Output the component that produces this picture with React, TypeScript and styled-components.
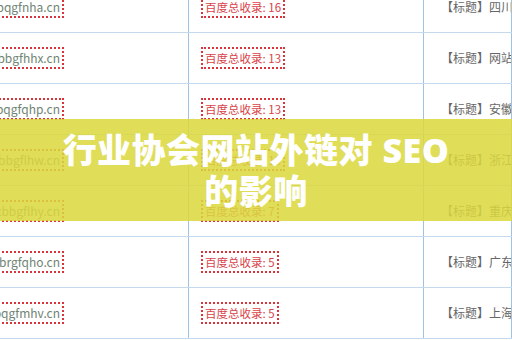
import styled, { createGlobalStyle } from "styled-components";

const GlobalStyle = createGlobalStyle`
  html, body {
    margin: 0;
    padding: 0;
    background: #ffffff;
    overflow: hidden;
  }
  body {
    font-family: "Noto Sans", "Noto Sans CJK SC", sans-serif;
  }
`;

const Stage = styled.div`
  position: relative;
  width: 512px;
  height: 340px;
  overflow: hidden;
  background: #fff;
`;

const Table = styled.div`
  margin-top: -18px;
  margin-left: -40px;
  display: flex;
  flex-direction: column;
`;

const Row = styled.div`
  display: grid;
  grid-template-columns: 229px 235px 1fr;
  height: 51px;
  box-sizing: border-box;
  border-bottom: 1px solid #c4d9ec;
`;

const Cell = styled.div<{ $align?: "start" | "end" }>`
  display: flex;
  align-items: center;
  justify-content: ${({ $align }) => ($align === "end" ? "flex-end" : "flex-start")};
  box-sizing: border-box;
  border-right: 1px solid #9fc2e2;
  padding: ${({ $align }) => ($align === "end" ? "0 124px 0 0" : "0 0 0 12px")};
  white-space: nowrap;
  overflow: hidden;
  font-family: "Noto Sans CJK SC", "Noto Sans", sans-serif;
  font-size: 12px;
  line-height: 16px;
`;

const Boxed = styled.span<{ $tone: "domain" | "count" }>`
  display: inline-block;
  padding: 1px 2px;
  border: 2px dotted #d8343a;
  font-size: ${({ $tone }) => ($tone === "domain" ? "12px" : "11.5px")};
  color: ${({ $tone }) => ($tone === "domain" ? "#6f8474" : "#d9434a")};
`;

const TitleText = styled.span`
  color: #666;
  padding-left: 5px;
`;

const Band = styled.div`
  position: absolute;
  left: 0;
  right: 0;
  top: 119px;
  height: 102px;
  background: rgba(219, 215, 62, 0.86);
  display: flex;
  align-items: center;
  justify-content: center;
`;

const Heading = styled.h1`
  margin: 0;
  max-width: 400px;
  text-align: center;
  color: #fff;
  font-family: "Noto Sans", "Noto Sans CJK SC", sans-serif;
  font-size: 34px;
  font-weight: 900;
  line-height: 41px;
  padding-top: 2px;
  letter-spacing: 0.5px;
`;

const rows = [
  { domain: "zxbqgfnha.cn", count: 16, title: "四川新闻网" },
  { domain: "zxbbgfhhx.cn", count: 13, title: "网站建设" },
  { domain: "zxbqgfqhp.cn", count: 13, title: "安徽新闻网" },
  { domain: "zxbbgflhw.cn", count: 10, title: "浙江新闻网" },
  { domain: "zxbbgflhy.cn", count: 7, title: "重庆新闻网" },
  { domain: "zxbrgfqho.cn", count: 5, title: "广东新闻网" },
  { domain: "zxbqgfmhv.cn", count: 5, title: "上海新闻网" },
];

const App = () => {
  return (
    <Stage>
      <GlobalStyle />
      <Table>
        {rows.map((r) => (
          <Row key={r.domain}>
            <Cell $align="end">
              <Boxed $tone="domain">{r.domain}</Boxed>
            </Cell>
            <Cell>
              <Boxed $tone="count">百度总收录: {r.count}</Boxed>
            </Cell>
            <Cell>
              <TitleText>【标题】{r.title}</TitleText>
            </Cell>
          </Row>
        ))}
      </Table>
      <Band>
        <Heading>行业协会网站外链对 SEO 的影响</Heading>
      </Band>
    </Stage>
  );
};

export default App;
